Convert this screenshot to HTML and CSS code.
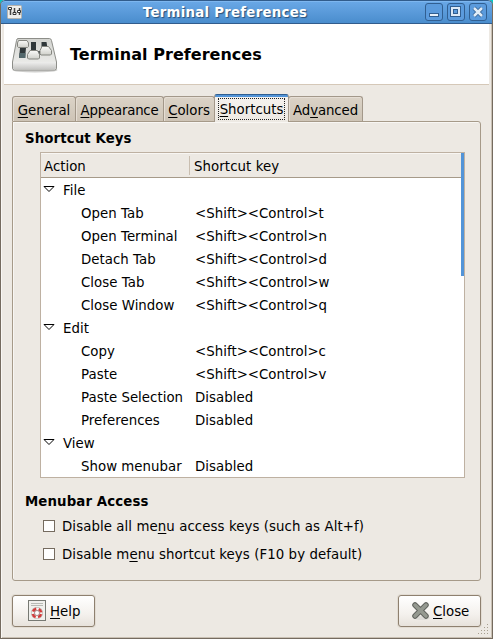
FILE: index.html
```html
<!DOCTYPE html>
<html lang="en">
<head>
<meta charset="utf-8">
<title>Terminal Preferences</title>
<link rel="stylesheet" href="styles.css">
</head>
<body>
<div class="window">
  <header class="titlebar">
    <svg class="app-icon" width="16" height="16" viewBox="0 0 16 16">
      <rect x=".5" y="1.500" width="14" height="13" rx="1" fill="#eeeeec" stroke="#b5b3ae"/>
      <path d="M3.500 6v5M7.500 4v7M12.500 4v7" stroke="#444" stroke-width="1.500"/>
      <path d="M1.500 3.500h3v2h-3zM6 8.500h3v2H6zM10.500 6.500h3v2h-3z" fill="#fff" stroke="#333"/>
    </svg>
    <span class="window-title">Terminal Preferences</span>
    <span class="wm-buttons">
      <svg width="18" height="18" viewBox="0 0 18 18"><rect class="wm" x=".5" y=".5" width="17" height="17" rx="2.500"/><rect x="4.500" y="10.500" width="9" height="3" fill="#e8f1fa" stroke="#315f91"/></svg>
      <svg width="18" height="18" viewBox="0 0 18 18"><rect class="wm" x=".5" y=".5" width="17" height="17" rx="2.500"/><rect x="3.500" y="3.500" width="10" height="10" fill="#dce9f6" stroke="#315f91"/><rect x="6.500" y="6.500" width="4" height="4" fill="#5b9bdd" stroke="#315f91"/></svg>
      <svg width="18" height="18" viewBox="0 0 18 18"><rect class="wm" x=".5" y=".5" width="17" height="17" rx="2.500"/><path d="M5 5l8 8M13 5l-8 8" stroke="#315f91" stroke-width="4"/><path d="M5 5l8 8M13 5l-8 8" stroke="#e1edf8" stroke-width="2.500"/></svg>
    </span>
  </header>
  <div class="banner">
    <svg class="mixer" width="48" height="36" viewBox="0 0 48 36">
      <defs>
        <linearGradient id="top" x2="0" y2="1"><stop stop-color="#d3d4d0"/><stop offset="1" stop-color="#f1f1ef"/></linearGradient>
        <linearGradient id="front" x2="0" y2="1"><stop stop-color="#ececeb"/><stop offset="1" stop-color="#c4c4c2"/></linearGradient>
        <linearGradient id="knob" x2="0" y2="1"><stop stop-color="#fafaf8"/><stop offset="1" stop-color="#cfd0ca"/></linearGradient>
      </defs>
      <ellipse cx="24" cy="33" rx="22.500" ry="2.500" fill="#cfcfcd"/>
      <path d="M7 1.500h31.500q1.500 0 2 2l5 21.500v6q0 2-2 2H3.500q-2 0-2-2v-6l4-21.500q.3-2 1.500-2z" fill="url(#top)" stroke="#8d8e89"/>
      <path d="M2 25.500h43v5q0 2-2 2H4q-2 0-2-2z" fill="url(#front)"/>
      <path d="M9 11h6l-1 10H8zM20 5h5v9h-5zM30.500 5h5l1 6h-6zM25.500 14h3.500v6h-3.500z" fill="#30383a"/>
      <path d="M8.500 16h6v5H8z" fill="#53686c"/>
      <g fill="url(#knob)" stroke="#858680">
        <path d="M7.500 3.500H16L17.500 6v3.500l-1 1H7.500l-1-1V6z"/>
        <path d="M19 13.500h7.500l2 4V21l-1 1H17.500l-1-1v-3.500z"/>
        <path d="M31 9.500h6.500l3 4v3.500l-1 1H30l-1-1v-3.500z"/>
      </g>
    </svg>
    <h1>Terminal Preferences</h1>
  </div>
  <main>
    <nav class="tabs">
      <span class="tab general"><span class="label"><u>G</u>eneral</span></span>
      <span class="tab appearance"><span class="label"><u>A</u>ppearance</span></span>
      <span class="tab colors"><span class="label"><u>C</u>olors</span></span>
      <span class="tab active"><span class="label"><u>S</u>hortcuts</span></span>
      <span class="tab advanced"><span class="label">Ad<u>v</u>anced</span></span>
    </nav>
    <section class="page">
      <h2>Shortcut Keys</h2>
      <div class="tree">
        <div class="tree-head"><span>Action</span><span class="key-head">Shortcut key</span></div>
        <div class="row group"><svg class="arrow" width="12" height="8" viewBox="0 0 12 8"><path d="M1 1.500h10L6 6.500z"/></svg>File</div>
        <div class="row"><span>Open Tab</span><span>&lt;Shift&gt;&lt;Control&gt;t</span></div>
        <div class="row"><span>Open Terminal</span><span>&lt;Shift&gt;&lt;Control&gt;n</span></div>
        <div class="row"><span>Detach Tab</span><span>&lt;Shift&gt;&lt;Control&gt;d</span></div>
        <div class="row"><span>Close Tab</span><span>&lt;Shift&gt;&lt;Control&gt;w</span></div>
        <div class="row"><span>Close Window</span><span>&lt;Shift&gt;&lt;Control&gt;q</span></div>
        <div class="row group"><svg class="arrow" width="12" height="8" viewBox="0 0 12 8"><path d="M1 1.500h10L6 6.500z"/></svg>Edit</div>
        <div class="row"><span>Copy</span><span>&lt;Shift&gt;&lt;Control&gt;c</span></div>
        <div class="row"><span>Paste</span><span>&lt;Shift&gt;&lt;Control&gt;v</span></div>
        <div class="row"><span>Paste Selection</span><span>Disabled</span></div>
        <div class="row"><span>Preferences</span><span>Disabled</span></div>
        <div class="row group"><svg class="arrow" width="12" height="8" viewBox="0 0 12 8"><path d="M1 1.500h10L6 6.500z"/></svg>View</div>
        <div class="row"><span>Show menubar</span><span>Disabled</span></div>
        <i class="scroll-thumb"></i>
      </div>
      <h2 class="access">Menubar Access</h2>
      <div class="check"><i class="box"></i><span>Disable all me<u>n</u>u access keys (such as Alt+f)</span></div>
      <div class="check"><i class="box"></i><span>Disable m<u>e</u>nu shortcut keys (F10 by default)</span></div>
    </section>
    <footer>
      <span class="button">
        <svg width="20" height="22" viewBox="0 0 20 22"><rect x="1.500" y=".5" width="17" height="20" fill="#f0f0ed" stroke="#777973"/><path d="M4 3.500h12M4 5.500h12" stroke="#b8bab5"/><circle cx="10" cy="13" r="4.300" fill="none" stroke="#a8aaa6" stroke-width="3.500"/><circle cx="10" cy="13" r="4.300" fill="none" stroke="#f5f3f0" stroke-width="2.500"/><circle cx="10" cy="13" r="4.300" fill="none" stroke="#d23c3c" stroke-width="2.500" stroke-dasharray="4.200 2.550" stroke-dashoffset="5.500"/><circle cx="10" cy="13" r="2.500" fill="#fff" stroke="#8c5050" stroke-width=".6"/></svg>
        <span><u>H</u>elp</span>
      </span>
      <span class="button close">
        <svg width="20" height="20" viewBox="0 0 20 20"><ellipse cx="11" cy="17" rx="8" ry="2" fill="#dedcd8"/><path d="M4 4l11 11M15 4L4 15" stroke="#61635e" stroke-width="5.500" stroke-linecap="round"/><path d="M4 4l11 11M15 4L4 15" stroke="#959990" stroke-width="3.500" stroke-linecap="round"/></svg>
        <span><u>C</u>lose</span>
      </span>
    </footer>
  </main>
  <svg class="grip" width="12" height="12" viewBox="0 0 12 12"><path d="M10 1.500h1M7 4.500h1m2 0h1M4 7.500h1m2 0h1m2 0h1M1 10.500h1m2 0h1m2 0h1m2 0h1" stroke="#a79f8f"/></svg>
</div>
</body>
</html>
```
FILE: styles.css
```css
* { box-sizing: border-box; }
body {
  margin: 0;
  background: #00c8cc;
  font: 13.333px/16px "DejaVu Sans", sans-serif;
  color: #000;
}
h1, h2 { margin: 0; font-weight: bold; }
h2 { font-size: 13.333px; line-height: 16px; letter-spacing: .1px; }
u { text-decoration-thickness: 1px; text-underline-offset: 2px; text-decoration-skip-ink: none; }
svg { display: block; flex: none; }
.window {
  position: relative;
  width: 493px;
  height: 639px;
  overflow: hidden;
  border-radius: 5px 5px 0 0;
  background: #ede9e3;
  border: solid #756b5f;
  border-width: 0 1px 1px;
  box-shadow: inset 1px 0 #f9f7f4, inset -1px -1px #c9c0b3;
}
.titlebar {
  display: flex;
  align-items: center;
  height: 24px;
  margin: 0 -1px;
  padding: 0 5px 0 6px;
  border: 1px solid #315c8c;
  border-radius: 5px 5px 0 0;
  background: linear-gradient(#6aa8e7, #4a8dcd);
  box-shadow: inset 0 1px #7db6ef;
}
.window-title {
  flex: 1;
  text-align: center;
  padding: 2px 0 0 2px;
  letter-spacing: .25px;
  color: #fff;
  font-weight: bold;
  text-shadow: 1px 1px 1px #285078;
}
.wm-buttons { display: flex; gap: 4px; }
.wm { fill: #5b9bdd; stroke: #315f91; }
.banner {
  display: flex;
  align-items: center;
  height: 61px;
  margin: 0 3px;
  padding: 1px 0 0 7px;
  background: #fff;
  border-bottom: 1px solid #d5c8b8;
}
.banner h1 { margin-left: 11px; padding-top: 1px; font-size: 16px; line-height: 20px; letter-spacing: .03px; }
main { padding: 8px 11px 0; }
.tabs { display: flex; align-items: flex-end; height: 28px; position: relative; z-index: 1; }
.tab {
  display: flex;
  justify-content: center;
  align-items: center;
  height: 25px;
  margin-right: -1px;
  border: 1px solid #a3988a;
  border-bottom: 0;
  border-radius: 3px 3px 0 0;
  background: linear-gradient(#dbd3c7, #cec4b6);
  box-shadow: inset 1px 1px #e6ded4;
  padding-top: 3px;
}
.general { width: 64px; }
.appearance { width: 89px; letter-spacing: -.2px; }
.colors { width: 52px; }
.tab.active {
  width: 75px;
  height: 28px;
  margin-bottom: -1px;
  border-top: 1px solid #315f91;
  background: linear-gradient(#5294d8 2px, #f5f2ee 2px, #ede9e3);
  box-shadow: none;
  padding-top: 0;
  z-index: 1;
}
.active .label { border: 1px dotted #222; padding: 3px 1px 1px; }
.advanced { width: 75px; letter-spacing: -.1px; }
.page {
  height: 460px;
  border: 1px solid #a69a89;
  border-radius: 0 3px 3px 3px;
  padding: 9px 15px 0 12px;
  box-shadow: inset 1px 1px #f8f6f3;
}
.tree {
  position: relative;
  height: 326px;
  margin: 5px 0 0 15px;
  border: 1px solid #beb1a2;
  background: #fff;
}
.tree-head {
  display: flex;
  align-items: center;
  height: 25px;
  padding-left: 3px;
  background: #ede9e3;
  border-bottom: 1px solid #a69a89;
  box-shadow: inset 0 1px #f8f6f3;
}
.tree-head span { width: 145px; padding-top: 3px; }
.tree-head .key-head { border-left: 1px solid #c9beb0; padding-left: 4px; letter-spacing: .08px; }
.row { display: flex; align-items: center; height: 23px; padding: 2px 0 0 40px; letter-spacing: .03px; }
.row span { width: 114px; white-space: nowrap; }
.group { padding-left: 2px; }
.arrow { margin: -4px 8px 0 0; }
.arrow path { fill: #fff; stroke: #000; }
.scroll-thumb { position: absolute; top: 0; right: 0; width: 3px; height: 123px; background: #5294d8; }
.access { margin-top: 16px; }
.check { display: flex; align-items: center; height: 28px; padding-left: 18px; letter-spacing: .08px; }
.check span { padding-top: 2px; }
.access + .check { margin-top: 2px; }
.box { width: 12px; height: 12px; margin-right: 7px; background: #fff; border: 1px solid #756b5f; }
footer { display: flex; justify-content: space-between; margin-top: 14px; }
.button {
  display: flex;
  align-items: center;
  width: 83px;
  height: 32px;
  padding-left: 14px;
  gap: 3px;
  border: 1px solid #8e806f;
  border-radius: 3px;
  background: linear-gradient(#fff, #f4f1ed 60%, #e7e2db);
  box-shadow: 0 0 0 1px #e2dcd3;
}
.button span { padding-top: 2px; }
.close { padding-left: 12px; gap: 2px; }
.grip { position: absolute; right: 3px; bottom: 3px; }
```
